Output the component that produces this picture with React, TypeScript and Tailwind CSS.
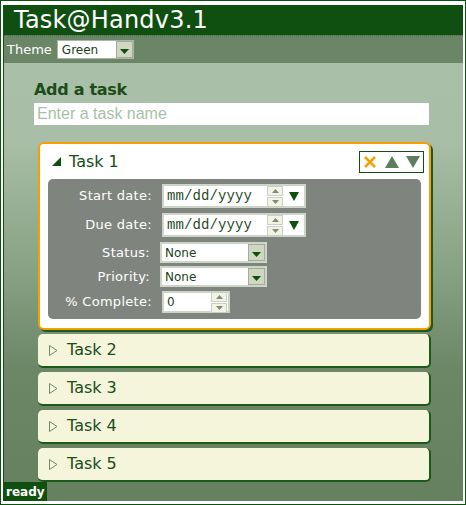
import React from 'react';

const verdana = "font-['DejaVu_Sans',Verdana,sans-serif]";

function Spinner() {
  return (
    <div className="flex flex-col gap-px">
      <div className="flex h-[10px] w-[16px] items-center justify-center border border-[#c9cfc3] bg-[#f3f3e3]">
        <svg width="7" height="4" viewBox="0 0 7 4"><path d="M0 4 L3.5 0 L7 4 Z" fill="#7f8a7c" /></svg>
      </div>
      <div className="flex h-[10px] w-[16px] items-center justify-center border border-[#c9cfc3] bg-[#f3f3e3]">
        <svg width="7" height="4" viewBox="0 0 7 4"><path d="M0 0 L7 0 L3.5 4 Z" fill="#7f8a7c" /></svg>
      </div>
    </div>
  );
}

function DropButton({ size = 17 }: { size?: number }) {
  return (
    <div
      className="flex items-end justify-center border border-[#9fae9c] bg-[radial-gradient(#d0d6c0_1px,#f4f4e4_1px)] bg-[length:2px_2px] pb-[3px]"
      style={{ width: size, height: size }}
    >
      <svg width="9" height="5" viewBox="0 0 9 5"><path d="M0 0 L9 0 L4.5 5 Z" fill="#0f4f0f" /></svg>
    </div>
  );
}

function DateField() {
  return (
    <div className="flex h-[24px] w-[144px] items-center border-2 border-[#cdd5c8] bg-white pl-[3px] pr-[5px]">
      <span className="font-['Liberation_Mono',monospace] text-[14px] tracking-[0.1px] text-[#1f4a1f]">mm/dd/yyyy</span>
      <div className="ml-auto flex items-center gap-[6px]">
        <Spinner />
        <svg width="10" height="9" viewBox="0 0 10 9"><path d="M0 0 L10 0 L5 9 Z" fill="#0f4f0f" /></svg>
      </div>
    </div>
  );
}

function SelectField() {
  return (
    <div className="flex h-[21px] w-[107px] items-center border-2 border-[#cdd5c8] bg-white pl-[3px]">
      <span className={`${verdana} text-[12px] text-[#1a3f1a]`}>None</span>
      <div className="ml-auto">
        <DropButton />
      </div>
    </div>
  );
}

function Row({ label, children }: { label: string; children: React.ReactNode }) {
  return (
    <div className="flex items-center">
      <div className={`${verdana} w-[106px] pr-[2px] text-right text-[13px] tracking-[0.3px] text-white`}>{label}</div>
      <div className="pl-[8px]">{children}</div>
    </div>
  );
}

function CollapsedTask({ name }: { name: string }) {
  return (
    <div className="flex h-[34px] items-center rounded-[5px] border-r-2 border-b-2 border-[#1c5a1c] bg-[#f5f5dc] pl-[11px]">
      <svg width="9" height="11" viewBox="0 0 9 11">
        <path d="M0.5 0.5 L8 5.5 L0.5 10.5 Z" fill="none" stroke="#6e8a6a" strokeWidth="1" />
      </svg>
      <span className={`${verdana} ml-[9px] text-[16px] text-[#1a4d1a]`}>{name}</span>
    </div>
  );
}

export default function App() {
  return (
    <div className="h-[505px] w-[466px] border border-[#0f4f0f] bg-white pt-[4px] pr-[2px] pb-[3px] pl-[2px]">
      <div className="flex h-full flex-col border-l border-[#0f4f0f]">
        <header className="flex h-[30px] items-center bg-[#0f4f0f] pl-[10px]">
          <h1 className={`${verdana} text-[24px] leading-none tracking-[0.2px] text-white`}>Task@Handv3.1</h1>
        </header>

        <div className="flex h-[28px] items-center gap-[5px] border-t border-dotted border-[#4f6a4c] bg-[#6b8567] pl-[3px]">
          <span className={`${verdana} text-[13px] text-white`}>Theme</span>
          <div className="flex h-[19px] w-[77px] items-center border border-[#a9b6a4] bg-white pl-[4px]">
            <span className={`${verdana} text-[12px] text-[#1a3f1a]`}>Green</span>
            <div className="ml-auto">
              <DropButton size={17} />
            </div>
          </div>
        </div>

        <main className="flex flex-1 flex-col bg-[linear-gradient(to_bottom,#a9bfa7_0%,#a8bea6_18%,#8aa487_45%,#6b8766_70%,#64805f_100%)]">
          <div className="flex-1 pt-[17px] pl-[30px] pr-[35px]">
            <h2 className={`${verdana} text-[16px] font-bold leading-[20px] tracking-[-0.3px] text-[#1a4d1a]`}>Add a task</h2>
            <div className="mt-[3px] flex h-[22px] w-[395px] items-center bg-white pl-[3px]">
              <span className="font-['Liberation_Sans',Arial,sans-serif] text-[16px] text-[#a9bfa7]">Enter a task name</span>
            </div>

            <div className="mt-[17px] ml-[4px] flex w-[393px] flex-col gap-[4px]">
              <div className="rounded-[6px] border-2 border-[#f5a000] bg-white shadow-[2px_2px_0_#1c5a1c]">
                <div className="flex h-[35px] items-center pl-[12px] pr-[5px]">
                  <svg width="9" height="9" viewBox="0 0 9 9"><path d="M9 0 L9 9 L0 9 Z" fill="#0f4f0f" /></svg>
                  <span className={`${verdana} ml-[8px] text-[16px] text-[#1a4d1a]`}>Task 1</span>
                  <div className="ml-auto flex h-[22px] w-[65px] items-center justify-between border border-[#0f4f0f] bg-white px-[3px]">
                    <svg width="14" height="14" viewBox="0 0 14 14">
                      <path d="M2 2 L12 12 M12 2 L2 12" stroke="#f5a000" strokeWidth="2.5" />
                    </svg>
                    <svg width="14" height="12" viewBox="0 0 14 12"><path d="M7 0 L14 12 L0 12 Z" fill="#5d7f5d" /></svg>
                    <svg width="14" height="12" viewBox="0 0 14 12"><path d="M0 0 L14 0 L7 12 Z" fill="#5d7f5d" /></svg>
                  </div>
                </div>
                <div className="mx-[8px] mb-[9px] flex flex-col rounded-[5px] bg-[#7f857e] pt-[5px] pb-[6px]">
                  <Row label="Start date:"><DateField /></Row>
                  <div className="mt-[5px]">
                    <Row label="Due date:"><DateField /></Row>
                  </div>
                  <div className="-ml-[2px] mt-[5px] flex flex-col gap-[3px]">
                    <Row label="Status:"><SelectField /></Row>
                    <Row label="Priority:"><SelectField /></Row>
                  </div>
                  <div className="mt-[4px]">
                    <Row label="% Complete:">
                      <div className="flex h-[22px] w-[68px] items-center border-2 border-[#cdd5c8] bg-white pl-[3px] pr-[1px]">
                        <span className={`${verdana} text-[12px] text-[#1a3f1a]`}>0</span>
                        <div className="ml-auto">
                          <Spinner />
                        </div>
                      </div>
                    </Row>
                  </div>
                </div>
              </div>

              <CollapsedTask name="Task 2" />
              <CollapsedTask name="Task 3" />
              <CollapsedTask name="Task 4" />
              <CollapsedTask name="Task 5" />
            </div>
          </div>

          <div className="flex h-[19px] items-center">
            <span className={`${verdana} flex h-full items-center bg-[#0f4f0f] px-[2px] text-[12px] font-bold text-white`}>ready</span>
          </div>
        </main>
      </div>
    </div>
  );
}
